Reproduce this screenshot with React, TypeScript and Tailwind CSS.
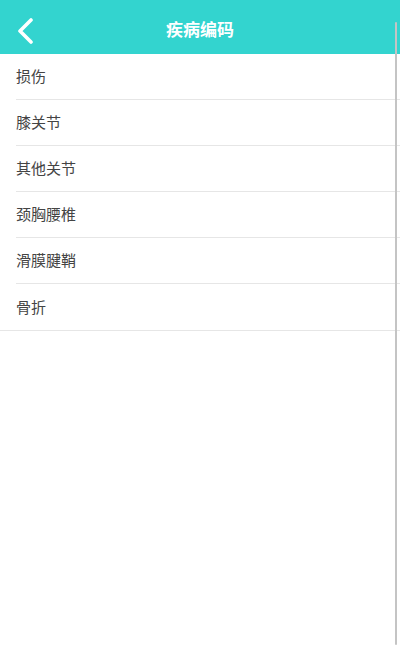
const items = ["损伤", "膝关节", "其他关节", "颈胸腰椎", "滑膜腱鞘", "骨折"];

export default function App() {
  return (
    <div
      className="relative w-[400px] h-[647px] bg-white overflow-hidden"
      style={{ fontFamily: '"Noto Sans CJK SC", "Noto Sans", sans-serif' }}
    >
      <header className="h-[54px] bg-[#33d4cf] flex items-center relative">
        <button className="pl-[16px] pt-[8px] text-white">
          <svg width="20" height="26" viewBox="0 0 20 26" fill="none">
            <polyline
              points="15,2 4,13 15,24"
              stroke="currentColor"
              strokeWidth="3.6"
              strokeLinecap="round"
              strokeLinejoin="round"
            />
          </svg>
        </button>
        <h1 className="absolute left-0 right-0 pt-[3px] text-center text-white text-[17px] font-bold pointer-events-none">
          疾病编码
        </h1>
      </header>

      <ul>
        {items.map((name, i) => (
          <li key={name} className={i === items.length - 1 ? "border-b border-[#e6e6e6]" : "pl-4"}>
            <div
              className={
                "h-[46px] flex items-center text-[15px] text-[#444] " +
                (i === items.length - 1 ? "pl-4" : "border-b border-[#e6e6e6]")
              }
            >
              {name}
            </div>
          </li>
        ))}
      </ul>

      {/* scroll indicator */}
      <div className="absolute right-[3px] top-[22px] bottom-[2px] w-[2px] rounded-full bg-[#c4c4c4]" />
    </div>
  );
}
